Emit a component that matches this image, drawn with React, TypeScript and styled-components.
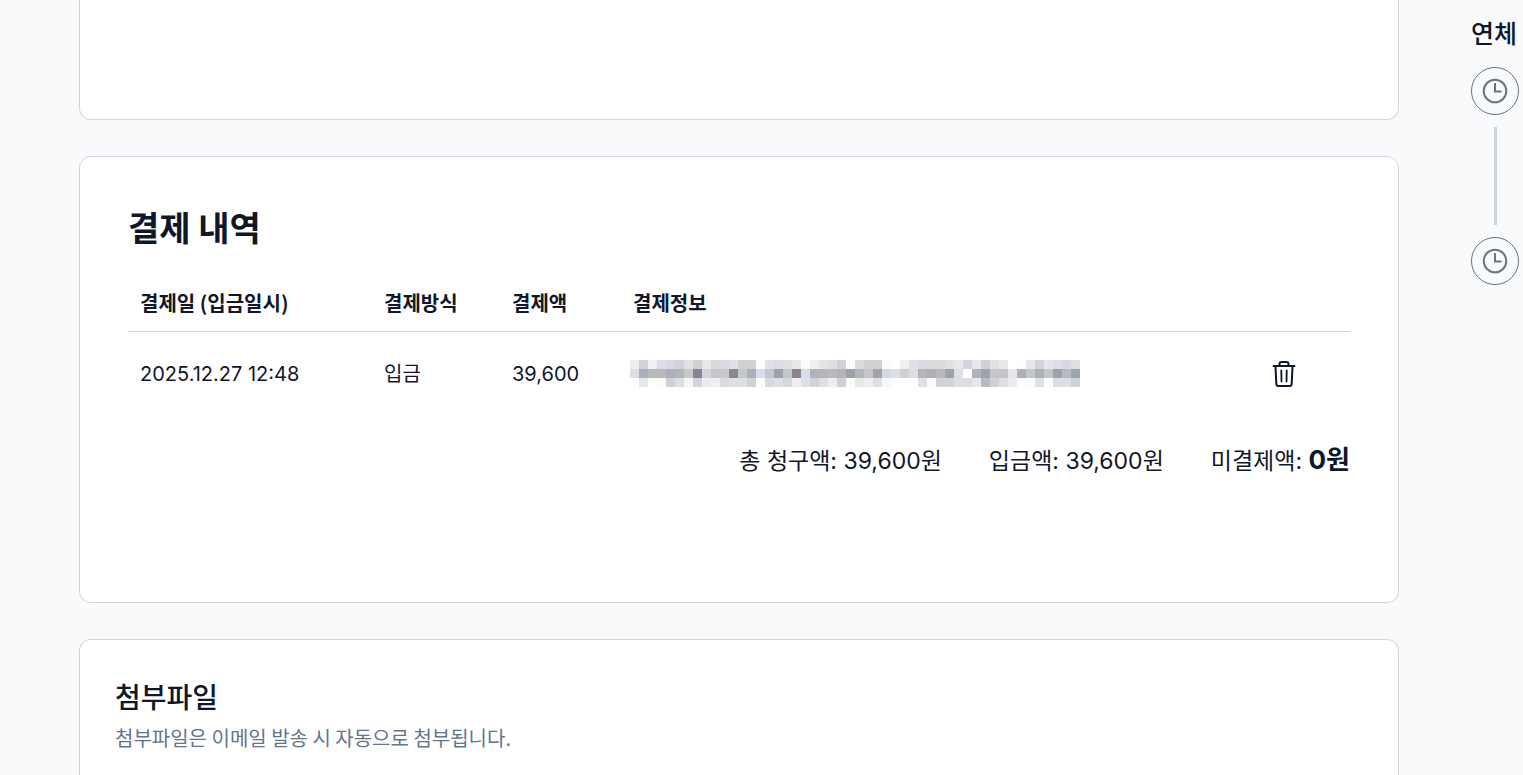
import React from "react";
import styled, { createGlobalStyle } from "styled-components";

const color = {
  page: "#f9fafc",
  ink: "#0f172a",
  muted: "#64748b",
  line: "#d1d5db",
  rail: "#d1d3db",
  step: "#6b7280",
};

const mixedFont = `Inter, "Noto Sans CJK KR", sans-serif`;
const koreanFont = `"Noto Sans CJK KR", sans-serif`;

const GlobalStyle = createGlobalStyle`
  * { box-sizing: border-box; }
  html, body { margin: 0; background: ${color.page}; }
  body { color: ${color.ink}; font-family: ${mixedFont}; }
`;

const Page = styled.div`
  display: flex;
  gap: 72px;
  height: 100vh;
  padding: 0 4px 0 79px;
  overflow: hidden;
`;

const Main = styled.main`
  display: flex;
  flex: 1;
  flex-direction: column;
  gap: 36px;
  min-width: 0;
`;

const Card = styled.section`
  flex: none;
  border: 1px solid ${color.line};
  border-radius: 12px;
  background: #fff;
`;

const PreviousCard = styled(Card)`
  height: 120px;
  border-top: 0;
  border-radius: 0 0 12px 12px;
`;

const PaymentCard = styled(Card)`
  padding: 48px 48px 124px;
`;

const AttachmentCard = styled(Card)`
  flex: 1 0 auto;
  padding: 36px 35px;
  border-bottom: 0;
  border-radius: 12px 12px 0 0;
`;

const Title = styled.h2`
  margin: 0 0 26px;
  font: 700 34px/44px ${koreanFont};
`;

const Table = styled.table`
  width: 100%;
  border-spacing: 0;
  table-layout: fixed;
  font-size: 20px;
  line-height: 28px;
`;

const Column = styled.col<{ $width?: number }>`
  width: ${(p) => (p.$width ? `${p.$width}px` : "auto")};
`;

const HeadCell = styled.th`
  height: 57px;
  padding: 0 12px;
  border-bottom: 1px solid ${color.line};
  font-family: ${koreanFont};
  font-weight: 700;
  text-align: left;
`;

const Cell = styled.td`
  height: 83px;
  padding: 0 12px;
`;

const MaskedCell = styled(Cell)`
  padding: 0 9px;
`;

const Mosaic = styled.svg`
  display: block;
`;

const IconButton = styled.button`
  display: block;
  padding: 0;
  border: 0;
  background: none;
  color: ${color.ink};
  cursor: pointer;

  svg { display: block; }
`;

const Totals = styled.div`
  display: flex;
  justify-content: flex-end;
  align-items: baseline;
  gap: 47px;
  margin-top: 29px;
  font-size: 23px;
  line-height: 34px;
`;

const Total = styled.span`
  white-space: nowrap;
`;

const Unpaid = styled.strong`
  font-size: 26px;
  font-weight: 700;
  line-height: 26px;
`;

const AttachmentTitle = styled.h3`
  margin: 0;
  font: 500 28px/40px ${koreanFont};
`;

const Hint = styled.p`
  margin: 7px 0 0;
  color: ${color.muted};
  font: 400 20px/30px ${koreanFont};
`;

const Timeline = styled.aside`
  flex: none;
  width: 48px;
  padding-top: 15px;
`;

const TimelineTitle = styled.h3`
  margin: 0 0 18px;
  font: 500 25px/34px ${koreanFont};
  white-space: nowrap;
`;

const Steps = styled.ol`
  display: flex;
  flex-direction: column;
  align-items: center;
  gap: 12px;
  margin: 0;
  padding: 0;
  list-style: none;
`;

const Step = styled.li`
  display: grid;
  place-items: center;
  width: 48px;
  height: 48px;
  border: 1px solid ${color.step};
  border-radius: 50%;
  color: ${color.step};
`;

const Rail = styled.li`
  width: 3px;
  height: 98px;
  background: ${color.rail};
`;

const mosaicRows = [
  "eeeeee cfd2da f0f0f0 dcdde2 d6dae2 d0d3dc dfe1e5 cfd0d4 e6e7ea d9dade d9dbe0 dfe0e4 d0d1d5 d0d1d5 fafcfe dfe1e6 dcdde2 dfe0e4 e7e8ea fafcfc efefef e3e5e8 dedfe3 cfd2d6 fafdfd d9dbdf cfd0d4 cfd0d4 fafcff ffffff f0f0f0 dfe0e4 dadbe0 dadbdf dadce0 dfe0e5 e6e7e9 d0d4de e6e7ea d0d1d6 e0e1e5 e8e9ea ffffff fbfcfd e6e8ea d0d4de e4e5e8 dcdfe4 d5d8dc dddfe5",
  "dcdfe5 a9aeba b9b9bf bbb9bd abb0ba b3b5b9 c7cacd 8b8190 d1d4df c4c5c8 c8c9cb 8a8897 c5c8cb aab0bc d5dfe9 c5c6ca 9aa2b0 c5c8cb 8d8090 d5e1ea adb4be b3b5ba bbb9bf b3b5b9 9ca3b0 b6b5ba c4c6ca a0a2ac cfdae6 dfe0e4 cfd0d7 dddee3 b5b5b9 adafb5 bbb9be 9ba2b0 dddfe4 ffffff b1b2b6 9da2af c4c6ca c4c6ca e6e7e9 adb0b8 c3c6ca adb0b9 c3c5c9 9ca3b0 bab9bf 9ca3b1",
  "ffffff e6e7ea fdfefe fafcf0 cfd2da dddfe4 f5f5f5 d0d4dc eaebec efefef d9dbe0 dfe0e4 dddfe3 cfd2d6 ffffff d6d9e0 dfe0e5 d5d8de eeeeef dfe0e5 d0d3da dfe0e5 efedee d0d0d4 fbfefd e6e8ea efeeee dfe0e4 f3f8fc ffffff ffffff ffffff dfe0e5 fafcfd d0d3da d2d5db dedfe3 dadde2 e8e8ea bab9bf d0d1d6 dfe0e5 ececee fcfdfe fafcfd dfe0e5 ffffff dcdde0 dedfe5 cfd1d6",
].map((row) => row.split(" "));

function MaskedInfo() {
  return (
    <Mosaic width="450" height="27" shapeRendering="crispEdges" aria-hidden="true">
      {mosaicRows.map((row, y) =>
        row.map((fill, x) => (
          <rect key={`${x}-${y}`} x={x * 9} y={y * 9} width="9" height="9" fill={`#${fill}`} />
        ))
      )}
    </Mosaic>
  );
}

function TrashIcon() {
  return (
    <svg width="24" height="28" viewBox="0 0 24 28" fill="none" stroke="currentColor" strokeWidth="2" strokeLinecap="round" strokeLinejoin="round">
      <path d="M1.500 6h21M7.500 5.500V4a2 2 0 0 1 2-2h5a2 2 0 0 1 2 2v1.500M3.500 6.500l.8 17.500a2.200 2.200 0 0 0 2.200 2h11a2.200 2.200 0 0 0 2.200-2l.8-17.500" />
      <path d="M9.300 10.500l.2 11M14.700 10.500l-.2 11" strokeWidth="1.800" />
    </svg>
  );
}

function ClockIcon() {
  return (
    <svg width="26" height="26" viewBox="0 0 26 26" fill="none" stroke="currentColor" strokeWidth="2">
      <circle cx="13" cy="13" r="11.300" />
      <path d="M13 5v8.500h6.500" />
    </svg>
  );
}

export default function App() {
  return (
    <>
      <GlobalStyle />
      <Page>
        <Main>
          <PreviousCard />
          <PaymentCard>
            <Title>결제 내역</Title>
            <Table>
              <colgroup>
                <Column $width={244} />
                <Column $width={128} />
                <Column $width={121} />
                <Column />
                <Column $width={90} />
              </colgroup>
              <thead>
                <tr>
                  <HeadCell scope="col">결제일 (입금일시)</HeadCell>
                  <HeadCell scope="col">결제방식</HeadCell>
                  <HeadCell scope="col">결제액</HeadCell>
                  <HeadCell scope="col">결제정보</HeadCell>
                  <HeadCell />
                </tr>
              </thead>
              <tbody>
                <tr>
                  <Cell>2025.12.27 12:48</Cell>
                  <Cell>입금</Cell>
                  <Cell>39,600</Cell>
                  <MaskedCell>
                    <MaskedInfo />
                  </MaskedCell>
                  <Cell>
                    <IconButton type="button" aria-label="삭제">
                      <TrashIcon />
                    </IconButton>
                  </Cell>
                </tr>
              </tbody>
            </Table>
            <Totals>
              <Total>총 청구액: 39,600원</Total>
              <Total>입금액: 39,600원</Total>
              <Total>
                미결제액: <Unpaid>0원</Unpaid>
              </Total>
            </Totals>
          </PaymentCard>
          <AttachmentCard>
            <AttachmentTitle>첨부파일</AttachmentTitle>
            <Hint>첨부파일은 이메일 발송 시 자동으로 첨부됩니다.</Hint>
          </AttachmentCard>
        </Main>
        <Timeline>
          <TimelineTitle>연체</TimelineTitle>
          <Steps>
            <Step>
              <ClockIcon />
            </Step>
            <Rail role="presentation" />
            <Step>
              <ClockIcon />
            </Step>
          </Steps>
        </Timeline>
      </Page>
    </>
  );
}
